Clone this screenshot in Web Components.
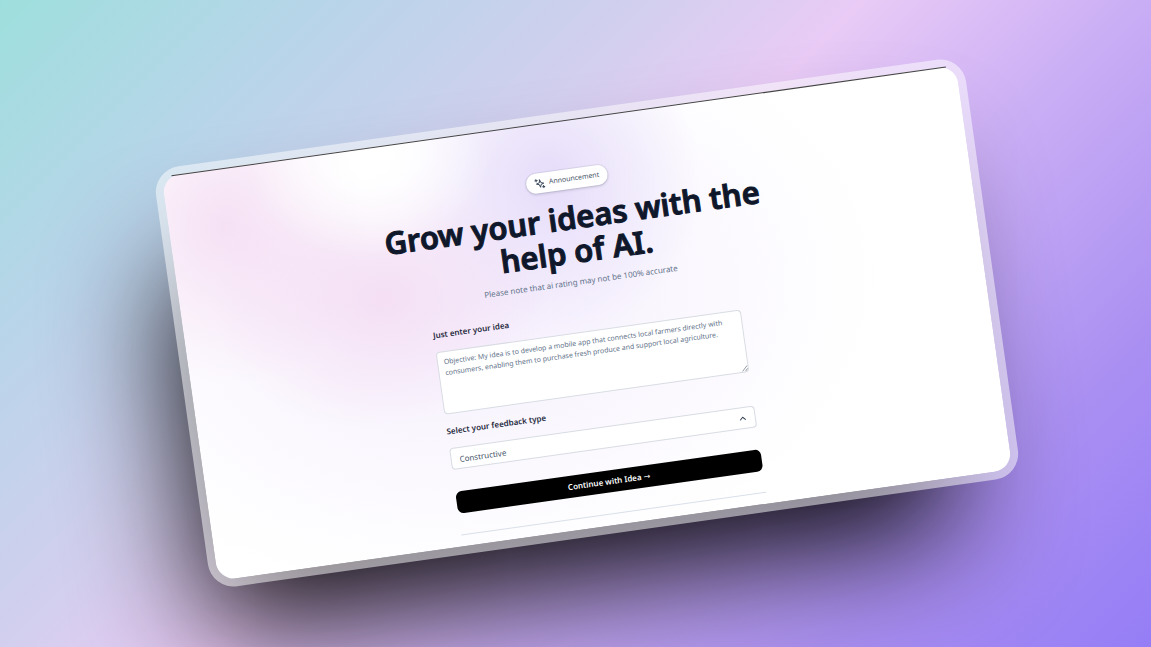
<!DOCTYPE html>
<html lang="en">
<head>
<meta charset="utf-8">
<title>Grow your ideas</title>
<style>
html, body { height: 100%; margin: 0; overflow: hidden; }
body { font-family: "Noto Sans", "Open Sans", sans-serif; color: #0f172a; }
</style>
</head>
<body>
<showcase-stage>
  <app-window>
    <announcement-pill>Announcement</announcement-pill>
    <hero-title>
      Grow your ideas with the help of AI.
      <span slot="note">Please note that ai rating may not be 100% accurate</span>
    </hero-title>
    <idea-form></idea-form>
  </app-window>
</showcase-stage>
<script>
const define = (name, html) => customElements.define(name, class extends HTMLElement {
  constructor() {
    super();
    this.attachShadow({ mode: "open" }).innerHTML = html;
  }
});

define("showcase-stage", `
<style>
:host {
  display: flex; align-items: center; justify-content: center;
  box-sizing: border-box; min-height: 100%; height: 100vh; padding: 0 0 1px 22px; overflow: hidden;
  background: linear-gradient(135deg, #9edfdd 0%, #bad4ea 20%, #d2cfee 36%, #e9cbf6 48%, #c9adf5 64%, #ab90f2 82%, #957df6 100%);
}
</style>
<slot></slot>`);

define("app-window", `
<style>
:host {
  display: flex; flex-direction: column; align-items: center;
  box-sizing: border-box; width: 71%; max-width: 1100px; padding-bottom: 11px;
  border-radius: 18px; transform: rotate(-8deg);
  background:
    radial-gradient(120px 100px at 26% 3%, #fff 15%, rgba(255,255,255,0)),
    radial-gradient(150px 160px at 7% 14%, rgba(243,214,240,.7), rgba(243,214,240,0)),
    radial-gradient(170px 130px at 25% 37%, rgba(243,214,240,.7), rgba(243,214,240,0)),
    radial-gradient(150px 160px at 48% 14%, rgba(226,216,249,.85), rgba(226,216,249,0)),
    radial-gradient(410px 280px at 36% 42%, rgba(245,239,253,1), rgba(245,239,253,0)),
    #fff;
  box-shadow:
    0 0 0 8px rgba(255,255,255,.5),
    -36px 76px 120px -26px rgba(0,0,0,.95);
}
.edge { align-self: stretch; height: 1px; margin: 0 10px 48px; background: #444; }
</style>
<div class="edge"></div>
<slot></slot>`);

define("announcement-pill", `
<style>
:host {
  display: flex; align-items: center; gap: 4px; box-sizing: border-box;
  height: 20px; padding: 0 8px; border-radius: 10px; background: #fff;
  font-size: 7px; line-height: 12px; color: #475569;
  box-shadow: 0 0 0 1px rgba(15,23,42,.05), 0 1px 3px rgba(15,23,42,.2);
}
svg { width: 11px; height: 11px; fill: none; stroke: #334155; stroke-width: 2; stroke-linejoin: round; stroke-linecap: round; }
</style>
<svg viewBox="0 0 24 24" aria-hidden="true"><path d="M13 4l2 6 6 2-6 2-2 6-2-6-6-2 6-2ZM5 2v5M2.500 4.500h5M20 17v5M17.500 19.500h5"/></svg>
<slot></slot>`);

define("hero-title", `
<style>
:host { display: flex; flex-direction: column; align-items: center; text-align: center; margin-top: 11px; }
h1 { max-width: 400px; margin: 0; font-size: 31px; line-height: 34px; font-weight: 600; -webkit-text-stroke: 1px #0f172a; }
p { margin: 8px 0 0; font-size: 8px; line-height: 12px; color: #64748b; }
</style>
<h1><slot></slot></h1>
<p><slot name="note"></slot></p>`);

define("idea-form", `
<style>
:host { display: block; width: 308px; margin-top: 21px; }
form { display: flex; flex-direction: column; }
label { font-size: 8px; line-height: 12px; font-weight: 600; color: #1e293b; margin-bottom: 11px; }
.field { display: grid; margin-bottom: 11px; }
.field > * { grid-area: 1 / 1; }
.choice { margin-bottom: 22px; }
textarea, select {
  box-sizing: border-box; width: 100%; margin: 0; border: 1px solid #d8dce3; border-radius: 4px;
  background: #fff; font-family: inherit; outline: none;
}
textarea { height: 63px; padding: 4px 6px; font-size: 7px; line-height: 11px; resize: none; overflow: hidden; }
textarea::placeholder { color: #64748b; opacity: 1; }
select { height: 22px; padding: 0 8px; font-size: 8px; color: #475569; appearance: none; }
svg { fill: none; stroke: #334155; stroke-linecap: round; stroke-linejoin: round; pointer-events: none; }
.grip { width: 6px; height: 6px; place-self: end; margin: 1px; }
.chevron { width: 8px; height: 8px; place-self: center end; margin-right: 9px; }
button {
  height: 22px; padding: 0; border: 0; border-radius: 6px; background: #000; color: #fff;
  font-family: inherit; font-size: 8px; line-height: 12px; font-weight: 600;
}
.arrow { font-family: "DejaVu Sans", sans-serif; font-weight: 400; }
hr { width: 100%; height: 1px; margin: 21px 0 0; border: 0; background: #d9e0ea; }
</style>
<form>
  <label for="idea">Just enter your idea</label>
  <div class="field">
    <textarea id="idea" placeholder="Objective: My idea is to develop a mobile app that connects local farmers directly with consumers, enabling them to purchase fresh produce and support local agriculture."></textarea>
    <svg class="grip" viewBox="0 0 6 6" aria-hidden="true"><path stroke-width=".5" d="M.5 5.500l5-5M3.500 5.500l2-2"/></svg>
  </div>
  <label for="kind">Select your feedback type</label>
  <div class="field choice">
    <select id="kind"><option>Constructive</option></select>
    <svg class="chevron" viewBox="0 0 8 8" aria-hidden="true"><path d="M1.500 5.500L4 3l2.500 2.500"/></svg>
  </div>
  <button type="button">Continue with Idea <span class="arrow">→</span></button>
  <hr>
</form>`);
</script>
</body>
</html>
